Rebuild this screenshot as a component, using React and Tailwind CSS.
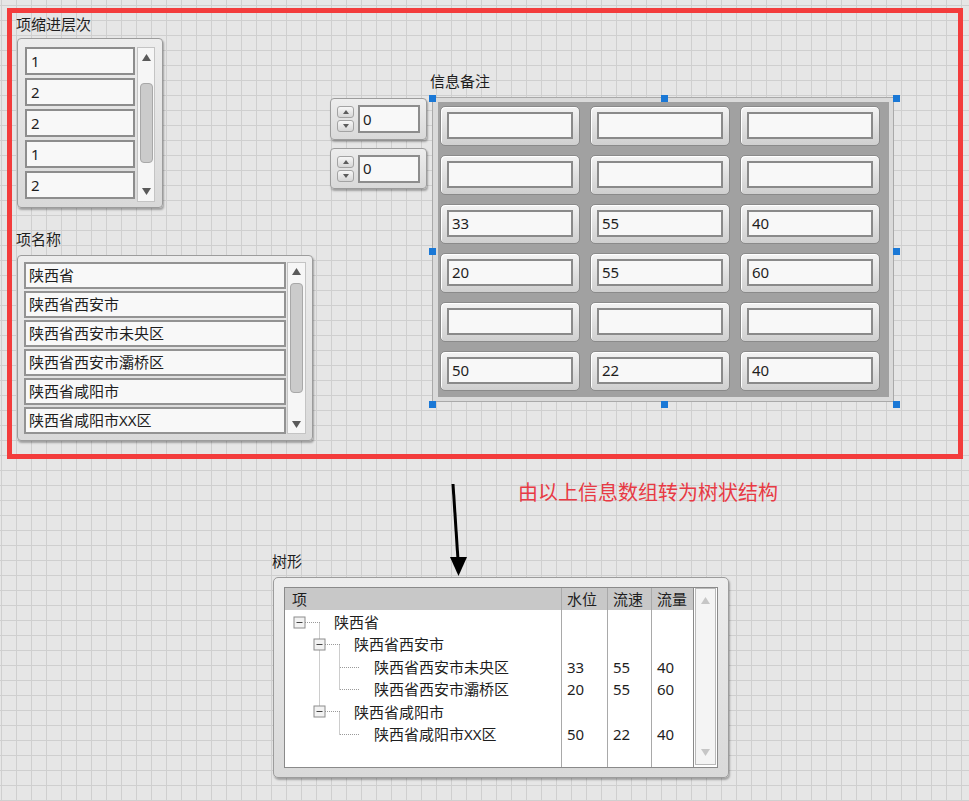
import React from "react";

// LabVIEW front panel: controls sit on a free canvas, so they are placed at their panel coordinates

const Tri = ({ dir = "up", color = "#5a5a5a", w = 9, h = 7 }) => (
  <svg width={w} height={h} viewBox={`0 0 ${w} ${h}`} className="block">
    <polygon
      points={dir === "up" ? `0,${h} ${w / 2},0 ${w},${h}` : `0,0 ${w},0 ${w / 2},${h}`}
      fill={color}
    />
  </svg>
);

const frame =
  "rounded-[4px] border border-[#9c9c9c] bg-[linear-gradient(#ededed,#d9d9d9)] shadow-[1px_2px_2px_rgba(0,0,0,0.3)]";

const SpinBtn = ({ dir }) => (
  <div className="flex h-[12px] w-[17px] items-center justify-center rounded-[3px] border border-[#a3a3a3] bg-[linear-gradient(#f7f7f7,#d6d6d6)]">
    <Tri dir={dir} w={6} h={4} color="#5c5c5c" />
  </div>
);

const IndexCtrl = ({ className }) => (
  <div className={`absolute flex w-[97px] items-center gap-[4px] pl-[6px] ${frame} ${className}`}>
    <div className="flex flex-col gap-[2px]">
      <SpinBtn dir="up" />
      <SpinBtn dir="down" />
    </div>
    <div className="flex h-[28px] w-[62px] items-center border-2 border-[#8d8d8d] bg-[#f8f8f8] pl-[3px] text-[15px]">
      0
    </div>
  </div>
);

const cells = [
  ["", "", ""],
  ["", "", ""],
  ["33", "55", "40"],
  ["20", "55", "60"],
  ["", "", ""],
  ["50", "22", "40"],
];

const handles = [
  "left-[429px] top-[95px]",
  "left-[661px] top-[95px]",
  "left-[893px] top-[95px]",
  "left-[429px] top-[248px]",
  "left-[893px] top-[248px]",
  "left-[429px] top-[401px]",
  "left-[661px] top-[401px]",
  "left-[893px] top-[401px]",
];

const treeRows = [
  { name: "陕西省", level: 0 },
  { name: "陕西省西安市", level: 1 },
  { name: "陕西省西安市未央区", level: 2, v: ["33", "55", "40"] },
  { name: "陕西省西安市灞桥区", level: 2, v: ["20", "55", "60"] },
  { name: "陕西省咸阳市", level: 1 },
  { name: "陕西省咸阳市XX区", level: 2, v: ["50", "22", "40"] },
];

const indent = ["pl-[49px]", "pl-[69px]", "pl-[89px]"];

const Box = ({ x, y }) => (
  <g>
    <rect x={x - 5.5} y={y - 5.5} width="11" height="11" fill="#f2f2f2" stroke="#8c8c8c" />
    <line x1={x - 3} y1={y} x2={x + 3} y2={y} stroke="#444" />
  </g>
);

const TreeLines = () => {
  const dot = { stroke: "#9a9a9a", strokeDasharray: "1 1" };
  return (
    <svg className="pointer-events-none absolute left-0 top-[1px]" width="100" height="140">
      <line x1="20" y1="11.5" x2="35" y2="11.5" {...dot} />
      <line x1="34.5" y1="11.5" x2="34.5" y2="100.5" {...dot} />
      <line x1="40" y1="33.5" x2="55" y2="33.5" {...dot} />
      <line x1="40" y1="100.5" x2="55" y2="100.5" {...dot} />
      <line x1="54.5" y1="33.5" x2="54.5" y2="78.5" {...dot} />
      <line x1="54.5" y1="100.5" x2="54.5" y2="123.5" {...dot} />
      <line x1="55" y1="56.5" x2="75" y2="56.5" {...dot} />
      <line x1="55" y1="78.5" x2="75" y2="78.5" {...dot} />
      <line x1="55" y1="123.5" x2="75" y2="123.5" {...dot} />
      <Box x={14.5} y={11.5} />
      <Box x={34.5} y={33.5} />
      <Box x={34.5} y={100.5} />
    </svg>
  );
};

export default function App() {
  return (
    <div className="relative h-[801px] w-[969px] overflow-hidden bg-[#e6e6e6] bg-[linear-gradient(to_right,#cfcfcf_1px,transparent_1px),linear-gradient(to_bottom,#cfcfcf_1px,transparent_1px)] bg-[size:15px_15px] bg-[position:1px_5px] font-['Noto_Sans','Noto_Sans_CJK_SC',sans-serif] text-[#1e1e1e]">
      {/* 项缩进层次 */}
      <div className="absolute left-[16px] top-[17px] text-[15px] leading-[15px]">项缩进层次</div>
      <div className={`absolute left-[17px] top-[38px] flex h-[170px] w-[146px] gap-[2px] pl-[7px] pt-[8px] ${frame}`}>
        <div className="flex w-[110px] flex-col gap-[3px]">
          {["1", "2", "2", "1", "2"].map((v, i) => (
            <div key={i} className="flex h-[28px] items-center border-2 border-[#8d8d8d] bg-[#f8f8f8] pl-[4px] text-[15px]">
              {v}
            </div>
          ))}
        </div>
        <div className="flex h-[155px] w-[18px] flex-col items-center border border-[#c4c4c4] bg-[#f6f6f6]">
          <div className="mt-[6px]"><Tri /></div>
          <div className="mt-[22px] h-[80px] w-[13px] rounded-[4px] border border-[#a8a8a8] bg-[#cbcbcb]" />
          <div className="mb-[6px] mt-auto"><Tri dir="down" /></div>
        </div>
      </div>

      {/* 项名称 */}
      <div className="absolute left-[16px] top-[232px] text-[15px] leading-[15px]">项名称</div>
      <div className={`absolute left-[17px] top-[255px] flex h-[186px] w-[296px] gap-[1px] pl-[6px] pt-[6px] ${frame}`}>
        <div className="flex w-[262px] flex-col gap-[2px]">
          {["陕西省", "陕西省西安市", "陕西省西安市未央区", "陕西省西安市灞桥区", "陕西省咸阳市", "陕西省咸阳市XX区"].map((v, i) => (
            <div key={i} className="flex h-[27px] items-center border-2 border-[#939393] bg-[#f8f8f8] pl-[3px] text-[15px]">
              {v}
            </div>
          ))}
        </div>
        <div className="flex h-[172px] w-[19px] flex-col items-center border border-[#c4c4c4] bg-[#f6f6f6]">
          <div className="mt-[5px]"><Tri /></div>
          <div className="mt-[8px] h-[110px] w-[13px] rounded-[4px] border border-[#a8a8a8] bg-[#cbcbcb]" />
          <div className="mb-[5px] mt-auto"><Tri dir="down" /></div>
        </div>
      </div>

      {/* index controls */}
      <IndexCtrl className="left-[330px] top-[98px] h-[42px]" />
      <IndexCtrl className="left-[330px] top-[148px] h-[41px]" />

      {/* 信息备注 */}
      <div className="absolute left-[430px] top-[74px] text-[15px] leading-[15px]">信息备注</div>
      <div className="absolute left-[432px] top-[97px] h-[305px] w-[462px] border border-[#a9a9a9] bg-[#dadada] pb-[4px] pl-[5px] pr-[4px] pt-[4px]">
        <div className="grid h-full grid-cols-[140px_140px_140px] content-start gap-x-[10px] gap-y-[9px] bg-[#a1a1a1] pl-[2px] pt-[4px]">
          {cells.flat().map((v, i) => (
            <div
              key={i}
              className="h-[40px] rounded-[5px] border border-[#8a8a8a] bg-[linear-gradient(#f3f3f3,#cfcfcf)] px-[6px] pb-[6px] pt-[5px] shadow-[inset_1px_1px_0_#ffffff]"
            >
              <div className="flex h-full items-center border-2 border-[#8a8a8a] bg-[#f8f8f8] pl-[3px] text-[15px]">{v}</div>
            </div>
          ))}
        </div>
      </div>
      {handles.map((h, i) => (
        <div key={i} className={`absolute h-[7px] w-[7px] bg-[#1a78d6] ${h}`} />
      ))}

      {/* red annotation box */}
      <div className="pointer-events-none absolute left-[7px] top-[8px] h-[451px] w-[956px] border-[5px] border-[#f33c3c]" />

      <div className="absolute left-[518px] top-[482px] text-[20px] leading-[22px] text-[#e83a44]">由以上信息数组转为树状结构</div>

      {/* arrow */}
      <svg className="absolute left-[440px] top-[480px]" width="40" height="100">
        <polygon points="11.5,4 14.5,4 19.5,80 16.5,80" fill="#000" />
        <polygon points="10,77 27,77 18.5,96" fill="#000" />
      </svg>

      {/* 树形 */}
      <div className="absolute left-[272px] top-[554px] text-[15px] leading-[15px]">树形</div>
      <div className={`absolute left-[273px] top-[577px] h-[201px] w-[456px] rounded-[5px] pl-[10px] pt-[9px] ${frame}`}>
        <div className="flex h-[181px] w-[434px] border border-[#8a8a8a] bg-white text-[15px]">
          <div className="relative w-[276px]">
            <div className="flex h-[22px] items-center bg-[#c8c8c8] pl-[7px]">项</div>
            <div className="pt-[1px]">
              {treeRows.map((r, i) => (
                <div key={i} className={`flex h-[22.4px] items-center ${indent[r.level]}`}>
                  {r.name}
                </div>
              ))}
            </div>
            <div className="absolute left-0 top-[22px]">
              <TreeLines />
            </div>
          </div>
          {["水位", "流速", "流量"].map((h, c) => (
            <div key={h} className={`border-l border-[#a9a9a9] ${c === 0 ? "w-[46px]" : c === 1 ? "w-[44px]" : "w-[42px]"}`}>
              <div className="flex h-[22px] items-center bg-[#c8c8c8] pl-[5px]">{h}</div>
              <div className="pt-[1px]">
                {treeRows.map((r, i) => (
                  <div key={i} className="flex h-[22.4px] items-center pl-[5px]">
                    {r.v ? r.v[c] : ""}
                  </div>
                ))}
              </div>
            </div>
          ))}
          <div className="w-[2px] border-l border-[#8a8a8a]" />
          <div className="flex h-[177px] w-[21px] flex-col items-center border border-[#b9b9b9] bg-[#f4f4f4]">
            <div className="mt-[8px]"><Tri color="#c6c6c6" /></div>
            <div className="mb-[8px] mt-auto"><Tri dir="down" color="#c6c6c6" /></div>
          </div>
        </div>
      </div>
    </div>
  );
}
